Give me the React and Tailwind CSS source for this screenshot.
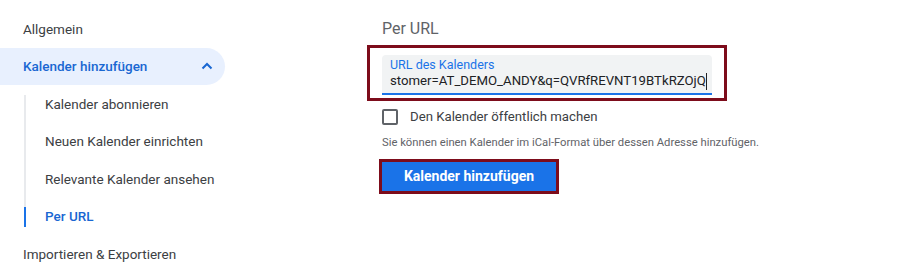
const navItem = 'flex items-center h-[37.5px] text-[13.5px] text-[#3c4043]'

const SubItem = ({ label, active }) => (
  <div className={`flex items-center h-[37.5px] pl-[45px] text-[13.5px] ${active ? 'text-[#1967d2] font-medium' : 'text-[#3c4043]'}`}>
    {label}
  </div>
)

const App = () => {
  return (
    <div className="w-[900px] h-[262px] bg-white flex overflow-hidden" style={{ fontFamily: 'Roboto, "Liberation Sans", sans-serif' }}>
      {/* left navigation */}
      <div className="w-[225px] pt-[10px] shrink-0">
        <div className={`${navItem} pl-[23px]`}>Allgemein</div>
        <div className="flex items-center justify-between h-[37.5px] pl-[23px] pr-[11px] rounded-r-full bg-[#e8f0fe] text-[13.5px] font-medium text-[#1967d2]">
          <span>Kalender hinzufügen</span>
          <svg width="12" height="8" viewBox="0 0 12 8" className="mr-[1px]">
            <path d="M1.5 6.5 L6 2 L10.5 6.5" fill="none" stroke="#1967d2" strokeWidth="2" />
          </svg>
        </div>
        <div className="flex h-[150px]">
          <div className="flex flex-col w-[2px] ml-[24px] pt-[10px]">
            <div className="h-[112px] bg-[#e8eaed]" />
            <div className="h-[20px] bg-[#1a73e8]" />
          </div>
          <div className="flex-1 -ml-[26px]">
            <SubItem label="Kalender abonnieren" />
            <SubItem label="Neuen Kalender einrichten" />
            <SubItem label="Relevante Kalender ansehen" />
            <SubItem label="Per URL" active />
          </div>
        </div>
        <div className={`${navItem} pl-[23px]`}>Importieren &amp; Exportieren</div>
      </div>

      {/* right content */}
      <div className="ml-[142px] pt-[18px]">
        <div className="pl-[15px] text-[16px] leading-[22px] text-[#5f6368]">Per URL</div>
        <div className="mt-[5px] w-[360px] h-[56px] border-[3px] border-[#7d0c1b] pl-[12px] pt-[7px]">
          <div className="w-[330px] h-[40px] bg-[#f1f3f4] rounded-t-[4px] border-b-2 border-[#1a73e8] pl-[8px] pt-[3px]">
            <div className="text-[12.5px] leading-[13px] text-[#1a73e8]">URL des Kalenders</div>
            <div className="flex items-center text-[13.2px] leading-[20px] text-[#202124]">
              <span>stomer=AT_DEMO_ANDY&amp;q=QVRfREVNT19BTkRZOjQ</span>
              <span className="w-[1px] h-[17px] bg-[#202124]" />
            </div>
          </div>
        </div>
        <div className="flex items-center mt-[7px] pl-[15px] h-[18px]">
          <div className="w-[16px] h-[16px] rounded-[2px] border-2 border-[#5f6368]" />
          <span className="ml-[12px] text-[13.2px] text-[#3c4043]">Den Kalender öffentlich machen</span>
        </div>
        <div className="mt-[10px] pl-[15px] text-[11.25px] leading-[14px] text-[#5f6368]">
          Sie können einen Kalender im iCal-Format über dessen Adresse hinzufügen.
        </div>
        <div className="mt-[9px] ml-[12px] w-[180px] h-[35px] border-[3px] border-[#7d0c1b] flex">
          <div className="flex-1 flex items-center justify-center bg-[#1a73e8] text-white text-[14px] font-bold">
            Kalender hinzufügen
          </div>
        </div>
      </div>
    </div>
  )
}

export default App
